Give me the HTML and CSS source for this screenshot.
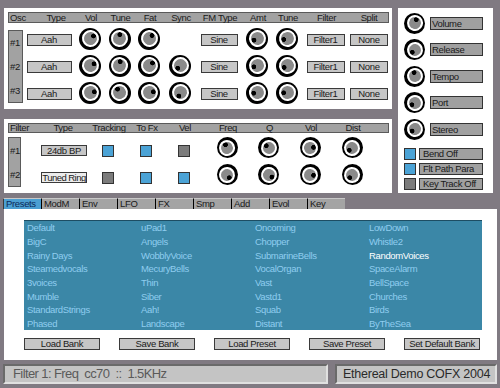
FILE: index.html
```html
<!DOCTYPE html>
<html>
<head>
<meta charset="utf-8">
<link rel="stylesheet" href="styles.css">
</head>
<body>
<div class="app">
  <div class="top">
    <div class="leftcol">
      <section class="panel osc">
        <div class="hdr osc-grid">
          <span class="l">Osc</span><span class="type-h">Type</span><span>Vol</span><span>Tune</span><span>Fat</span><span>Sync</span><span>FM Type</span><span>Amt</span><span>Tune</span><span>Filter</span><span>Split</span>
        </div>
        <div class="osc-grid body3">
          <div class="rowlabels r3"><span>#1</span><span>#2</span><span>#3</span></div>
          <span class="c"><b class="btn w45">Aah</b></span>
          <span class="c"><i class="knob" style="--a:50deg"></i></span>
          <span class="c"><i class="knob" style="--a:5deg"></i></span>
          <span class="c"><i class="knob" style="--a:40deg"></i></span>
          <span class="c"></span>
          <span class="c"><b class="btn w37">Sine</b></span>
          <span class="c"><i class="knob" style="--a:245deg"></i></span>
          <span class="c"><i class="knob" style="--a:255deg"></i></span>
          <span class="c"><b class="btn w38">Filter1</b></span>
          <span class="c"><b class="btn w38">None</b></span>

          <span class="c"><b class="btn w45">Aah</b></span>
          <span class="c"><i class="knob" style="--a:65deg"></i></span>
          <span class="c"><i class="knob" style="--a:10deg"></i></span>
          <span class="c"><i class="knob" style="--a:50deg"></i></span>
          <span class="c"><i class="knob" style="--a:225deg"></i></span>
          <span class="c"><b class="btn w37">Sine</b></span>
          <span class="c"><i class="knob" style="--a:250deg"></i></span>
          <span class="c"><i class="knob" style="--a:240deg"></i></span>
          <span class="c"><b class="btn w38">Filter1</b></span>
          <span class="c"><b class="btn w38">None</b></span>

          <span class="c"><b class="btn w45">Aah</b></span>
          <span class="c"><i class="knob" style="--a:80deg"></i></span>
          <span class="c"><i class="knob" style="--a:-30deg"></i></span>
          <span class="c"><i class="knob" style="--a:80deg"></i></span>
          <span class="c"><i class="knob" style="--a:205deg"></i></span>
          <span class="c"><b class="btn w37">Sine</b></span>
          <span class="c"><i class="knob" style="--a:260deg"></i></span>
          <span class="c"><i class="knob" style="--a:265deg"></i></span>
          <span class="c"><b class="btn w38">Filter1</b></span>
          <span class="c"><b class="btn w38">None</b></span>
        </div>
      </section>

      <section class="panel filt">
        <div class="hdr filt-grid">
          <span class="l">Filter</span><span class="type-f">Type</span><span>Tracking</span><span>To Fx</span><span>Vel</span><span>Freq</span><span>Q</span><span>Vol</span><span>Dist</span>
        </div>
        <div class="filt-grid body2">
          <div class="rowlabels r2"><span>#1</span><span>#2</span></div>
          <span class="c type-f"><b class="btn w46">24db BP</b></span>
          <span class="c"><i class="sq on"></i></span>
          <span class="c"><i class="sq on"></i></span>
          <span class="c"><i class="sq"></i></span>
          <span class="c"><i class="knob sm" style="--a:335deg"></i></span>
          <span class="c"><i class="knob sm" style="--a:310deg"></i></span>
          <span class="c"><i class="knob sm" style="--a:80deg"></i></span>
          <span class="c"><i class="knob sm" style="--a:230deg"></i></span>

          <span class="c type-f"><b class="btn w46 light">Tuned Ring</b></span>
          <span class="c"><i class="sq"></i></span>
          <span class="c"><i class="sq on"></i></span>
          <span class="c"><i class="sq on"></i></span>
          <span class="c"><i class="knob sm" style="--a:140deg"></i></span>
          <span class="c"><i class="knob sm" style="--a:125deg"></i></span>
          <span class="c"><i class="knob sm" style="--a:95deg"></i></span>
          <span class="c"><i class="knob sm" style="--a:220deg"></i></span>
        </div>
      </section>
    </div>

    <section class="panel side">
      <div class="krow"><i class="knob sm" style="--a:20deg"></i><span class="lbl">Volume</span></div>
      <div class="krow"><i class="knob sm" style="--a:230deg"></i><span class="lbl">Release</span></div>
      <div class="krow"><i class="knob sm" style="--a:345deg"></i><span class="lbl">Tempo</span></div>
      <div class="krow"><i class="knob sm" style="--a:240deg"></i><span class="lbl">Port</span></div>
      <div class="krow"><i class="knob sm" style="--a:235deg"></i><span class="lbl">Stereo</span></div>
      <div class="toggles">
        <div class="trow"><i class="sq on"></i><span class="lbl wide">Bend Off</span></div>
        <div class="trow"><i class="sq on"></i><span class="lbl wide">Flt Path Para</span></div>
        <div class="trow"><i class="sq"></i><span class="lbl wide">Key Track Off</span></div>
      </div>
    </section>
  </div>

  <nav class="tabs">
    <span class="tab active">Presets</span><span class="tab">ModM</span><span class="tab">Env</span><span class="tab">LFO</span><span class="tab">FX</span><span class="tab">Smp</span><span class="tab">Add</span><span class="tab">Evol</span><span class="tab">Key</span>
  </nav>

  <section class="content">
    <div class="presets">
      <span>Default</span><span>BigC</span><span>Rainy Days</span><span>Steamedvocals</span><span>3voices</span><span>Mumble</span><span>StandardStrings</span><span>Phased</span>
      <span>uPad1</span><span>Angels</span><span>WobblyVoice</span><span>MecuryBells</span><span>Thin</span><span>Siber</span><span>Aah!</span><span>Landscape</span>
      <span>Oncoming</span><span>Chopper</span><span>SubmarineBells</span><span>VocalOrgan</span><span>Vast</span><span>Vastd1</span><span>Squab</span><span>Distant</span>
      <span>LowDown</span><span>Whistle2</span><span class="sel">RandomVoices</span><span>SpaceAlarm</span><span>BellSpace</span><span>Churches</span><span>Birds</span><span>ByTheSea</span>
    </div>
    <div class="btns">
      <b class="btn pb">Load Bank</b><b class="btn pb">Save Bank</b><b class="btn pb">Load Preset</b><b class="btn pb">Save Preset</b><b class="btn pb">Set Default Bank</b>
    </div>
  </section>

  <footer class="status">
    <div class="sbox left">Filter 1: Freq&nbsp; cc70&nbsp; ::&nbsp; 1.5KHz</div>
    <div class="sbox right">Ethereal Demo COFX 2004</div>
  </footer>
</div>
</body>
</html>
```

FILE: styles.css
```css
* { box-sizing: border-box; }
html, body { margin: 0; padding: 0; }
body {
  width: 500px;
  height: 388px;
  overflow: hidden;
  background: #807a82;
  font-family: "Liberation Sans", Arial, sans-serif;
  font-size: 9.5px;
  letter-spacing: -0.35px;
  color: #1a1a1a;
}
.app { width: 500px; height: 388px; }

.top { display: flex; gap: 6px; padding: 8px 0 0 4px; }
.leftcol { display: flex; flex-direction: column; gap: 10px; width: 388px; }
.panel { background: #fff; }

.osc { height: 101px; padding: 4px 3px 0 4px; }
.filt { height: 74px; padding: 4px 3px 0 4px; }

.hdr {
  background: #a2a2a2;
  border: 1px solid #5a5a5a;
  height: 11px;
  line-height: 9px;
  align-items: center;
}
.filt .hdr { height: 10px; line-height: 8px; }
.hdr span { text-align: center; white-space: nowrap; }
.hdr .l { text-align: left; padding-left: 1px; }

.osc-grid { display: grid; grid-template-columns: 15px 52px 30px 29px 30px 32px 46px 30px 30px 47px 1fr; }
.body3 { grid-template-rows: repeat(3, 27px); margin-top: 2px; }
.hdr .type-h { padding-left: 12px; }

.filt-grid { display: grid; grid-template-columns: 13px 65px 44px 32px 44px 42px 41px 42px 42px; }
.body2 { grid-template-rows: repeat(2, 27px); margin-top: 4px; }
.type-f { padding-left: 21px; }
.hdr .type-f { padding-left: 17px; }

.c { display: flex; align-items: center; justify-content: center; }

.rowlabels {
  grid-column: 1;
  background: #a2a2a2;
  border: 1px solid #5a5a5a;
  display: grid;
  align-items: center;
  padding-left: 1px;
}
.r3 { grid-row: 1 / 4; margin: 5px 0 3px; grid-template-rows: repeat(3, 1fr); }
.r2 { grid-row: 1 / 3; margin: 0 0 4px; grid-template-rows: repeat(2, 1fr); }

.btn {
  font-weight: normal;
  display: block;
  height: 12px;
  line-height: 10px;
  text-align: center;
  background: #c6c6c6;
  border: 1px solid #3a3a3a;
  white-space: nowrap;
}
.osc .btn { margin-top: 3px; }
.w45 { width: 45px; }
.w37 { width: 37px; }
.w38 { width: 38px; }
.w46 { width: 46px; height: 11px; line-height: 9px; flex: none; overflow: hidden; }
.btn.light { background: #ececec; letter-spacing: -0.55px; }

.knob {
  display: grid;
  place-items: center;
  width: 22px;
  height: 22px;
  border-radius: 50%;
  background: #000;
  flex: none;
}
.knob::before {
  content: "";
  width: 13px;
  height: 13px;
  border-radius: 50%;
  box-shadow: 0 0 0 2px #fff;
  background: radial-gradient(circle at 50% 20%, #000 0 2.1px, rgba(0,0,0,0) 2.7px), #8a8a8a;
  transform: rotate(var(--a));
}
.knob.sm { width: 21px; height: 21px; }
.knob.sm::before { width: 12px; height: 12px; }
.filt .knob { margin-bottom: 6px; }

.sq {
  display: block;
  width: 12px;
  height: 12px;
  background: #7c7c7c;
  border: 1px solid #333;
  flex: none;
}
.sq.on { background: #4ba3d6; }

.side { width: 95px; height: 185px; padding: 2px 0 0 6px; }
.krow { display: flex; align-items: center; height: 26.5px; gap: 5px; }
.lbl {
  display: block;
  width: 53px;
  height: 13px;
  line-height: 11px;
  background: #a0a0a0;
  border: 1px solid #333;
  padding-left: 1px;
  white-space: nowrap;
  overflow: hidden;
}
.lbl.wide { width: 64px; height: 12px; line-height: 10px; padding-left: 3px; }
.toggles { display: flex; flex-direction: column; gap: 3px; margin-top: 5.5px; }
.trow { display: flex; gap: 3px; height: 12px; }

.tabs { display: flex; margin-top: 5px; padding-left: 3px; height: 11px; }
.tab {
  width: 38px;
  height: 11px;
  line-height: 10px;
  background: #a4a4a4;
  border-left: 1px solid #000;
  border-top: 1px solid #c8c8c8;
  padding-left: 2px;
}
.tab.active { background: #4b9fd2; color: #0c2a58; border-left-color: #3a3a3a; }

.content {
  margin: 0 3px 0 4px;
  height: 151px;
  background: #fff;
  padding: 11px 15px 0 20px;
}
.presets {
  display: grid;
  grid-auto-flow: column;
  grid-template-columns: repeat(4, 114px);
  grid-template-rows: repeat(8, 13.7px);
  align-items: center;
  height: 110px;
  padding-left: 3px;
  background: #3b87a7;
  border-top: 1px solid #1d4d63;
  color: #8fcdef;
}
.presets .sel { color: #fff; }
.btns { display: flex; gap: 19px; margin-top: 8px; }
.btn.pb { width: 76px; height: 12px; }

.status { display: flex; gap: 7px; margin-top: 4px; padding-left: 3px; height: 20px; }
.sbox {
  height: 20px;
  background: #c4c4c4;
  border: 2px solid;
  border-color: #6a6a6a #e0e0e0 #e0e0e0 #6a6a6a;
  font-size: 13px;
  line-height: 16px;
  letter-spacing: -0.25px;
  white-space: nowrap;
}
.sbox.left { width: 325px; color: #5a5a5a; padding-left: 8px; letter-spacing: -0.6px; }
.sbox.right { width: 162px; color: #2a2a2a; padding-left: 6px; font-size: 12.5px; }
```
